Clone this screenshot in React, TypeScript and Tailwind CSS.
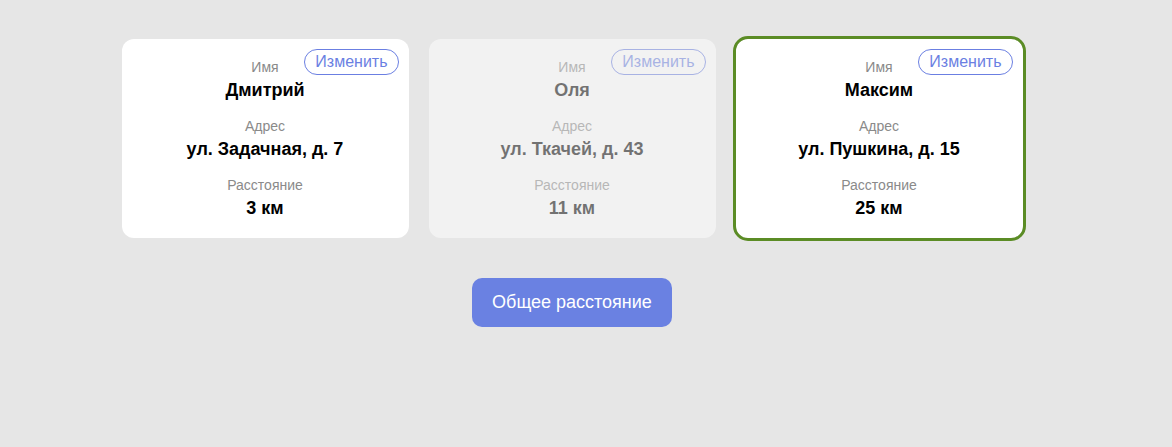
const people = [
  { id: 1, name: "Дмитрий", address: "ул. Задачная, д. 7", distance: 3, state: "normal" },
  { id: 2, name: "Оля", address: "ул. Ткачей, д. 43", distance: 11, state: "disabled" },
  { id: 3, name: "Максим", address: "ул. Пушкина, д. 15", distance: 25, state: "selected" },
];

function Field({ label, value }: { label: string; value: string }) {
  return (
    <div className="flex flex-col items-center gap-1">
      <span className="text-[14px] leading-[16px] text-[#8a8a8a]">{label}</span>
      <span className="text-[18px] leading-[22px] font-bold text-black">{value}</span>
    </div>
  );
}

function PersonCard({ person }: { person: (typeof people)[number] }) {
  const base = "relative w-[287px] h-[199px] rounded-[12px] bg-white pt-[20px] flex flex-col gap-[17px]";
  const cls =
    person.state === "disabled"
      ? base + " opacity-50"
      : person.state === "selected"
        ? base + " outline-[3px] outline-solid outline-[#5b8c25]"
        : base;

  return (
    <div className={cls}>
      <button className="absolute top-[10px] right-[10px] h-[26px] px-[10px] rounded-full border border-[#6b7fe2] text-[16px] leading-[24px] text-[#6b7fe2] bg-transparent">
        Изменить
      </button>
      <Field label="Имя" value={person.name} />
      <Field label="Адрес" value={person.address} />
      <Field label="Расстояние" value={`${person.distance} км`} />
    </div>
  );
}

export default function App() {
  return (
    <div
      className="min-h-[447px] w-full bg-[#e6e6e6]"
      style={{ fontFamily: '"Liberation Sans", Arial, sans-serif' }}
    >
      <div className="w-[1144px] flex flex-col items-center pt-[39px]">
        <div className="flex gap-[20px]">
          {people.map((p) => (
            <PersonCard key={p.id} person={p} />
          ))}
        </div>
        <button className="mt-[40px] w-[200px] h-[49px] rounded-[10px] bg-[#6a81e2] text-white text-[18px]">
          Общее расстояние
        </button>
      </div>
    </div>
  );
}
